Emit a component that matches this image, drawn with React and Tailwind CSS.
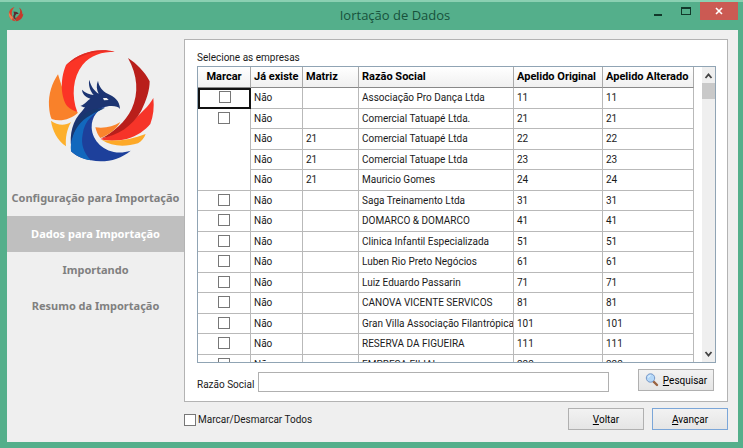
import { useState } from "react";

const rows = [
  { existe: "Não", matriz: "", razao: "Associação Pro Dança Ltda", original: "11", alterado: "11" },
  { existe: "Não", matriz: "", razao: "Comercial Tatuapé Ltda.", original: "21", alterado: "21", span: 4 },
  { existe: "Não", matriz: "21", razao: "Comercial Tatuapé Ltda", original: "22", alterado: "22", child: true },
  { existe: "Não", matriz: "21", razao: "Comercial Tatuape Ltda", original: "23", alterado: "23", child: true },
  { existe: "Não", matriz: "21", razao: "Mauricio Gomes", original: "24", alterado: "24", child: true },
  { existe: "Não", matriz: "", razao: "Saga Treinamento Ltda", original: "31", alterado: "31" },
  { existe: "Não", matriz: "", razao: "DOMARCO & DOMARCO", original: "41", alterado: "41" },
  { existe: "Não", matriz: "", razao: "Clinica Infantil Especializada", original: "51", alterado: "51" },
  { existe: "Não", matriz: "", razao: "Luben Rio Preto Negócios", original: "61", alterado: "61" },
  { existe: "Não", matriz: "", razao: "Luiz Eduardo Passarin", original: "71", alterado: "71" },
  { existe: "Não", matriz: "", razao: "CANOVA VICENTE SERVICOS", original: "81", alterado: "81" },
  { existe: "Não", matriz: "", razao: "Gran Villa Associação Filantrópica", original: "101", alterado: "101" },
  { existe: "Não", matriz: "", razao: "RESERVA DA FIGUEIRA", original: "111", alterado: "111" },
  { existe: "Não", matriz: "", razao: "EMPRESA FILIAL", original: "222", alterado: "222" },
];

const steps = ["Configuração para Importação", "Dados para Importação", "Importando", "Resumo da Importação"];

function Phoenix({ className }) {
  return (
    <svg viewBox="0 0 375 390" className={className} aria-hidden="true">
      <path d="M54 103C36 130 25 162 27 198C28 216 31 230 35 237C62 246 92 238 114 218C84 198 68 150 54 103Z" fill="#f9812a" />
      <path d="M33 242C37 272 52 300 78 319C76 293 80 270 93 246C75 258 52 256 33 242Z" fill="#fdb02c" />
      <path d="M224 35C180 24 122 32 78 75C58 122 64 176 82 199C91 208 101 213 112 216C94 168 98 112 128 74C151 45 187 35 224 35Z" fill="#fb3426" />
      <path d="M224 35C180 24 122 32 78 75C91 67 118 49 146 41C174 33 201 32 224 35Z" fill="#dd2b24" />
      <path d="M340 174C324 202 304 217 288 233C260 262 224 284 181 297C201 304 232 303 260 297C292 288 316 270 331 252C340 228 343 202 340 174Z" fill="#f63429" />
      <path d="M264 54C293 105 297 160 275 207C256 246 220 277 184 295C232 288 278 258 303 214C320 180 329 150 329 124C313 93 290 71 264 54Z" fill="#b91f1b" />
      <path d="M241 246C220 260 193 266 166 262C169 275 174 286 181 294C207 285 229 268 241 246Z" fill="#fa852d" />
      <path d="M317 282C276 299 229 305 186 300C215 320 256 321 294 310C305 303 313 293 317 282Z" fill="#fda928" />
      <path d="M121 198C137 192 142 181 151 176C136 171 127 162 126 149C136 159 149 163 161 165C151 153 144 135 148 119C152 138 163 153 176 161C170 149 168 135 174 122C177 140 187 153 203 161C224 171 239 181 240 207C234 198 223 197 207 198C179 202 158 218 149 237C119 252 98 285 94 324C88 282 97 242 127 212L135 202C130 202 126 199 121 198Z" fill="#1c3472" />
      <path d="M207 198C174 204 154 230 155 263C157 309 207 353 272 332C240 359 194 370 153 361C129 357 105 347 93 334C91 288 105 245 143 222C164 209 185 201 207 198Z" fill="#1d409b" />
      <path d="M194 205C164 216 133 241 128 283C122 314 131 337 152 361C128 357 105 346 93 333C90 280 119 235 165 214Z" fill="#1268bd" />
      <path d="M165 207C127 218 96 251 94 304C101 270 121 241 153 225C166 216 181 211 194 204Z" fill="#17386f" />
      <path d="M189 174L200 174L206 180L192 181Z" fill="#efefef" />
    </svg>
  );
}

function AppIcon() {
  return (
    <svg viewBox="0 0 16 16" className="h-4 w-4" aria-hidden="true">
      <path d="M6.500 1C2.500 2 .5 5.500 1 9C1.500 12.500 4 15 7.500 15.200L5 11.500C3 8.500 3.500 4 6.500 1Z" fill="#d9402c" />
      <path d="M1 6C.3 9 1.500 12.500 4 14L5 11C3 10 2 8.500 1 6Z" fill="#e88454" />
      <path d="M11 1.500C13 4.500 12.500 8 9 11L7 12.500L8 15.200C12 14.800 15.200 12 15.300 7.500L14.300 8.500C14.500 5.500 13.500 3 11 1.500Z" fill="#c5392b" />
      <path d="M5.500 5.500L9 6L10.800 8L8.500 8C7 9 6.500 11 8 13.500C5.500 13 4.500 10.500 6 8Z" fill="#5a2c30" />
    </svg>
  );
}

function Magnifier() {
  return (
    <svg viewBox="0 0 14 14" className="h-3.5 w-3.5" aria-hidden="true">
      <path d="M8.500 8.500L12 12" stroke="#9a6240" strokeWidth="2.4" strokeLinecap="round" />
      <circle cx="5.500" cy="5" r="4.200" fill="#b5d8f8" stroke="#7798c8" />
      <path d="M3.300 4.600Q3.700 2.800 5.500 2.600" stroke="#eef8ff" fill="none" />
    </svg>
  );
}

const box =
  "block h-3 w-3 shrink-0 appearance-none border border-[#777] bg-white checked:bg-[#4c78a8]";
const cell = "overflow-hidden border-r border-b border-[#b9b9b9] py-0 pl-[3px] leading-4 whitespace-nowrap";
const head =
  "overflow-hidden border-r border-b border-[#aaa] border-b-[#888] bg-linear-to-b from-white to-[#f0f0f0] py-0 text-[11px] font-bold whitespace-nowrap text-black";
const headLeft = head + " pl-[3px] text-left";
const button =
  "flex items-center justify-center border bg-linear-to-b from-[#f2f2f2] to-[#e5e5e5] text-black";

export default function App() {
  const [marked, setMarked] = useState({});
  const toggle = (i) => setMarked((m) => ({ ...m, [i]: !m[i] }));
  const toggleAll = (e) => setMarked(Object.fromEntries(rows.map((_, i) => [i, e.target.checked])));

  return (
    <div className="flex h-screen flex-col border-t-2 border-[#8bd0b2] bg-[#54af8b] font-[Roboto,sans-serif] text-[10px] text-[#1a1a1a]">
      <header className="flex h-7 shrink-0 items-start">
        <div className="flex flex-1 pt-1 pl-2">
          <AppIcon />
        </div>
        <h1 className="pt-[3px] pl-11 font-['Open_Sans',sans-serif] text-[13px] leading-5 text-[#17523b]">
          Iortação de Dados
        </h1>
        <div className="flex flex-1 justify-end pr-[5px]">
          <button aria-label="Minimizar" className="flex h-[18px] w-7 items-end justify-center pb-1">
            <span className="h-0.5 w-2 bg-[#12382a]" />
          </button>
          <button aria-label="Maximizar" className="flex h-[18px] w-7 items-center justify-center">
            <span className="h-2 w-2.5 border border-t-2 border-[#12382a]" />
          </button>
          <button aria-label="Fechar" className="flex h-[18px] w-[38px] items-center justify-center bg-[#cb5a53]">
            <svg viewBox="0 0 8 8" className="h-2 w-2" aria-hidden="true">
              <path d="M1 1L7 7M7 1L1 7" stroke="white" strokeWidth="1.6" />
            </svg>
          </button>
        </div>
      </header>

      <div className="mr-[5px] mb-1.5 ml-[7px] flex min-h-0 flex-1 bg-[#efefef]">
        <aside className="flex w-[177px] shrink-0 flex-col pt-2.5">
          <Phoenix className="ml-[33px] h-[130px] w-[125px]" />
          <ol className="mt-2.5 font-['Noto_Sans',sans-serif] text-[11px] font-bold text-[#808080]">
            {steps.map((step, i) => (
              <li
                key={step}
                className={
                  i === 1
                    ? "flex h-9 items-center justify-center bg-[#bfbfbf] whitespace-nowrap text-white"
                    : "flex h-9 items-center justify-center whitespace-nowrap"
                }
              >
                {step}
              </li>
            ))}
          </ol>
        </aside>

        <main className="flex min-w-0 flex-1 flex-col pt-[9px] pr-2.5">
          <section className="flex min-h-0 flex-1 flex-col border border-[#b3b3b3] bg-white pt-2.5 pr-[11px] pl-3">
            <h2 className="h-4 shrink-0 leading-4">Selecione as empresas</h2>
            <div className="flex min-h-0 flex-1 border border-[#90a4b4]">
              <div className="min-w-0 flex-1 overflow-hidden">
                <table className="w-full table-fixed border-separate border-spacing-0">
                  <colgroup>
                    <col className="w-[53px]" />
                    <col className="w-[52px]" />
                    <col className="w-14" />
                    <col />
                    <col className="w-[89px]" />
                    <col className="w-[91px]" />
                  </colgroup>
                  <thead>
                    <tr className="h-[21px]">
                      <th className={head + " px-0 text-center"}>Marcar</th>
                      <th className={headLeft}>Já existe</th>
                      <th className={headLeft}>Matriz</th>
                      <th className={headLeft}>Razão Social</th>
                      <th className={headLeft}>Apelido Original</th>
                      <th className={headLeft}>Apelido Alterado</th>
                    </tr>
                  </thead>
                  <tbody>
                    {rows.map((r, i) => (
                      <tr key={i} className="h-[21px] even:h-5">
                        {!r.child && (
                          <td
                            rowSpan={r.span || 1}
                            className={
                              i === 0
                                ? "border-2 border-[#111] p-0 align-top"
                                : "border-r border-b border-[#b9b9b9] p-0 align-top"
                            }
                          >
                            <input
                              type="checkbox"
                              aria-label={"Marcar " + r.razao}
                              checked={!!marked[i]}
                              onChange={() => toggle(i)}
                              className={i === 0 ? box + " mx-auto mt-px" : box + " mx-auto mt-[3px]"}
                            />
                          </td>
                        )}
                        <td className={cell}>{r.existe}</td>
                        <td className={cell}>{r.matriz}</td>
                        <td className={cell}>{r.razao}</td>
                        <td className={cell}>{r.original}</td>
                        <td className={cell}>{r.alterado}</td>
                      </tr>
                    ))}
                  </tbody>
                </table>
              </div>
              <div className="ml-2 flex w-[13px] shrink-0 flex-col items-center bg-[#efefef]" aria-hidden="true">
                <svg viewBox="0 0 13 16" className="h-4 w-full" fill="none" stroke="#444" strokeWidth="1.8">
                  <path d="M3.5 11L6.5 7.5L9.5 11" />
                </svg>
                <span className="h-4 w-full bg-[#c9c9c9]" />
                <svg viewBox="0 0 13 16" className="mt-auto h-4 w-full" fill="none" stroke="#444" strokeWidth="1.8">
                  <path d="M3.5 6L6.5 9.5L9.5 6" />
                </svg>
              </div>
            </div>
            <div className="flex h-[38px] shrink-0 items-start pt-1.5">
              <label htmlFor="razao" className="w-[61px] shrink-0 pt-2 leading-4 whitespace-nowrap">
                Razão Social
              </label>
              <input
                id="razao"
                type="text"
                className="mt-[3px] h-5 min-w-0 flex-1 border border-[#b0b0b0] bg-white px-1 outline-none"
              />
              <button className={button + " mr-0.5 ml-[29px] h-[22px] w-19 gap-1 border-[#b0b0b0]"}>
                <Magnifier />
                <span>
                  <u>P</u>esquisar
                </span>
              </button>
            </div>
          </section>

          <footer className="flex h-10 shrink-0 items-start pt-1.5">
            <label className="mt-1 flex items-center gap-0.5 leading-4 whitespace-nowrap">
              <input type="checkbox" onChange={toggleAll} className={box} />
              Marcar/Desmarcar Todos
            </label>
            <button className={button + " ml-auto h-[22px] w-19 border-[#b0b0b0]"}>
              <span>
                <u>V</u>oltar
              </span>
            </button>
            <button className={button + " ml-2 h-[22px] w-19 border-[#7ba6d8]"}>
              <span>
                <u>A</u>vançar
              </span>
            </button>
          </footer>
        </main>
      </div>
    </div>
  );
}
